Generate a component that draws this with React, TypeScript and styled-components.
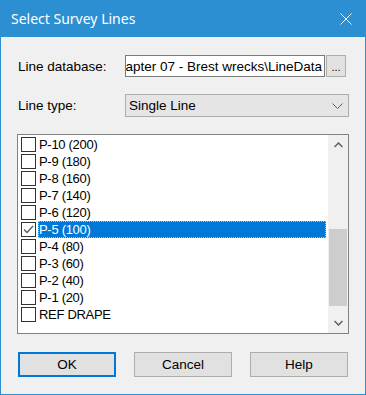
import styled, { createGlobalStyle } from 'styled-components';

const GlobalStyle = createGlobalStyle`
  html, body {
    margin: 0;
    padding: 0;
    background: #f0f0f0;
  }
  * {
    box-sizing: border-box;
  }
`;

const lines = [
  { name: 'P-10 (200)', checked: false },
  { name: 'P-9 (180)', checked: false },
  { name: 'P-8 (160)', checked: false },
  { name: 'P-7 (140)', checked: false },
  { name: 'P-6 (120)', checked: false },
  { name: 'P-5 (100)', checked: true, selected: true },
  { name: 'P-4 (80)', checked: false },
  { name: 'P-3 (60)', checked: false },
  { name: 'P-2 (40)', checked: false },
  { name: 'P-1 (20)', checked: false },
  { name: 'REF DRAPE', checked: false },
];

function App() {
  return (
    <>
      <GlobalStyle />
      <Window>
        <TitleBar>
          <Title>Select Survey Lines</Title>
          <CloseButton>
            <svg width="12" height="12" viewBox="0 0 12 12">
              <path d="M0.5 0.5 L11.5 11.5 M11.5 0.5 L0.5 11.5" stroke="#ffffff" strokeWidth="1" fill="none" />
            </svg>
          </CloseButton>
        </TitleBar>
        <Body>
          <FieldRow>
            <Label>Line database:</Label>
            <PathInput>
              <span>Chapter 07 - Brest wrecks\LineData</span>
            </PathInput>
            <BrowseButton>...</BrowseButton>
          </FieldRow>
          <FieldRow>
            <Label>Line type:</Label>
            <Select>
              <span>Single Line</span>
              <svg width="11" height="6" viewBox="0 0 11 6">
                <path d="M0.5 0.5 L5.5 5.5 L10.5 0.5" stroke="#606060" strokeWidth="1" fill="none" />
              </svg>
            </Select>
          </FieldRow>
          <ListBox>
            <Rows>
              {lines.map((item) => (
                <Row key={item.name}>
                  <CheckBox>
                    {item.checked && (
                      <svg width="13" height="13" viewBox="0 0 13 13">
                        <path d="M2 6.5 L5 9.5 L11 3" stroke="#5a5a5a" strokeWidth="1.3" fill="none" />
                      </svg>
                    )}
                  </CheckBox>
                  <RowText $selected={item.selected}>{item.name}</RowText>
                </Row>
              ))}
            </Rows>
            <ScrollBar>
              <ScrollArrow>
                <svg width="9" height="6" viewBox="0 0 9 6">
                  <path d="M0.5 5 L4.5 1 L8.5 5" stroke="#606060" strokeWidth="1.5" fill="none" />
                </svg>
              </ScrollArrow>
              <ScrollTrack>
                <ScrollThumb />
              </ScrollTrack>
              <ScrollArrow>
                <svg width="9" height="6" viewBox="0 0 9 6">
                  <path d="M0.5 1 L4.5 5 L8.5 1" stroke="#606060" strokeWidth="1.5" fill="none" />
                </svg>
              </ScrollArrow>
            </ScrollBar>
          </ListBox>
          <ButtonRow>
            <DialogButton $default>OK</DialogButton>
            <DialogButton>Cancel</DialogButton>
            <DialogButton>Help</DialogButton>
          </ButtonRow>
        </Body>
      </Window>
    </>
  )
}

export default App

const Window = styled.div`
  width: 366px;
  height: 395px;
  display: flex;
  flex-direction: column;
  border: 1px solid #2b8fd2;
  border-top: none;
  background: #f0f0f0;
  font-family: "Liberation Sans", Arial, sans-serif;
  font-size: 13.5px;
  color: #000;
`;

const TitleBar = styled.div`
  height: 37px;
  margin: 0 -1px;
  padding: 0 14px 0 11px;
  display: flex;
  align-items: center;
  justify-content: space-between;
  background: #2b8fd2;
  flex-shrink: 0;
`;

const Title = styled.span`
  font-family: "Noto Sans", "Open Sans", sans-serif;
  font-size: 14px;
  color: #ffffff;
`;

const CloseButton = styled.div`
  width: 12px;
  height: 12px;
  display: flex;
  margin-top: 1px;
`;

const Body = styled.div`
  flex: 1;
  padding: 18px 16px 0 16px;
  display: flex;
  flex-direction: column;
`;

const FieldRow = styled.div`
  display: flex;
  align-items: center;
  margin-bottom: 17px;
`;

const Label = styled.div`
  width: 108px;
  padding-left: 1px;
  flex-shrink: 0;
`;

const PathInput = styled.div`
  width: 200px;
  height: 22px;
  border: 1px solid #7a7a7a;
  background: #ffffff;
  display: flex;
  align-items: center;
  justify-content: flex-end;
  overflow: hidden;
  white-space: nowrap;
  padding-right: 2px;
  span {
    flex-shrink: 0;
  }
`;

const BrowseButton = styled.div`
  width: 20px;
  height: 22px;
  margin-left: 1px;
  border: 1px solid #adadad;
  background: #e1e1e1;
  display: flex;
  align-items: flex-end;
  justify-content: center;
  padding-bottom: 3px;
  font-size: 11px;
  line-height: 11px;
`;

const Select = styled.div`
  width: 224px;
  height: 23px;
  border: 1px solid #adadad;
  background: #e5e5e5;
  display: flex;
  align-items: center;
  justify-content: space-between;
  padding: 0 5px 0 3px;
`;

const ListBox = styled.div`
  width: 332px;
  height: 200px;
  border: 1px solid #828282;
  background: #ffffff;
  display: flex;
`;

const Rows = styled.div`
  flex: 1;
  padding: 1px 2px 0 3px;
  display: flex;
  flex-direction: column;
  font-size: 13px;
`;

const Row = styled.div`
  height: 17px;
  display: flex;
  align-items: center;
`;

const CheckBox = styled.div`
  width: 15px;
  height: 15px;
  border: 1px solid #333333;
  background: #ffffff;
  flex-shrink: 0;
  display: flex;
  align-items: center;
  justify-content: center;
  margin-right: 2px;
`;

const RowText = styled.div<{ $selected?: boolean }>`
  flex: 1;
  height: 17px;
  line-height: 17px;
  padding-left: 1px;
  letter-spacing: -0.3px;
  color: ${(p) => (p.$selected ? '#ffffff' : '#000000')};
  background: ${(p) => (p.$selected ? '#0078d7' : 'transparent')};
  outline: ${(p) => (p.$selected ? '1px dotted #9cc8ee' : 'none')};
  outline-offset: -1px;
`;

const ScrollBar = styled.div`
  width: 20px;
  display: flex;
  flex-direction: column;
  background: #f0f0f0;
`;

const ScrollArrow = styled.div`
  height: 20px;
  display: flex;
  align-items: center;
  justify-content: center;
  flex-shrink: 0;
`;

const ScrollTrack = styled.div`
  flex: 1;
  padding: 74px 1px 7px 1px;
  display: flex;
`;

const ScrollThumb = styled.div`
  flex: 1;
  background: #cdcdcd;
`;

const ButtonRow = styled.div`
  margin-top: 18px;
  padding: 0 1px;
  display: flex;
  gap: 18px;
`;

const DialogButton = styled.div<{ $default?: boolean }>`
  width: 98px;
  height: 25px;
  display: flex;
  align-items: center;
  justify-content: center;
  background: #e1e1e1;
  border: ${(p) => (p.$default ? '2px solid #0078d7' : '1px solid #adadad')};
`;
